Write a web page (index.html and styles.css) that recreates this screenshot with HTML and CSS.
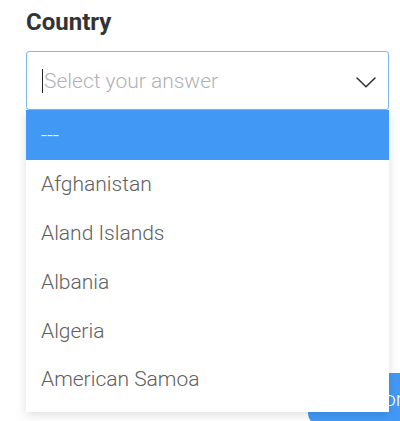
FILE: index.html
```html
<!DOCTYPE html>
<html lang="en">
<head>
<meta charset="utf-8">
<title>Country</title>
<link rel="stylesheet" href="styles.css">
</head>
<body>
<div class="form">
  <label class="label">Country</label>
  <div class="select-wrap">
    <div class="select">
      <span class="caret"></span>
      <span class="placeholder">Select your answer</span>
      <svg class="chevron" width="20" height="11" viewBox="0 0 20 11" aria-hidden="true">
        <polyline points="1,1 10,9.8 19,1" fill="none" stroke="#333" stroke-width="1.6" stroke-linecap="round" stroke-linejoin="round"/>
      </svg>
    </div>
    <ul class="menu">
      <li class="opt active">---</li>
      <li class="opt">Afghanistan</li>
      <li class="opt">Aland Islands</li>
      <li class="opt">Albania</li>
      <li class="opt">Algeria</li>
      <li class="opt">American Samoa</li>
    </ul>
  </div>
  <div class="actions">
    <button class="btn">Search for</button>
  </div>
</div>
</body>
</html>
```

FILE: styles.css
```css
html, body {
  margin: 0;
  padding: 0;
  background: #ffffff;
  overflow: hidden;
  font-family: Roboto, "Liberation Sans", sans-serif;
}

.form {
  padding: 8px 11px 0 26px;
  display: flex;
  flex-direction: column;
}

.label {
  display: block;
  font-size: 24px;
  line-height: 28px;
  font-weight: 700;
  color: #333333;
  margin-bottom: 15px;
}

.select-wrap {
  position: relative;
}

.select {
  height: 59px;
  box-sizing: border-box;
  border: 1px solid #7db6f4;
  border-radius: 3px;
  display: flex;
  align-items: center;
  padding: 0 12px 0 15px;
  background: #ffffff;
}

.caret {
  width: 1px;
  height: 24px;
  background: #222222;
  margin-right: 1px;
  flex-shrink: 0;
}

.placeholder {
  flex: 1;
  font-size: 21px;
  line-height: 24px;
  font-weight: 300;
  color: #b2b2b2;
}

.chevron {
  margin-top: 3px;
  flex-shrink: 0;
}

.menu {
  position: absolute;
  top: 100%;
  left: 0;
  right: 0;
  margin: 0;
  padding: 0 0 8px;
  list-style: none;
  background: #ffffff;
  box-shadow: 0 3px 10px rgba(0, 0, 0, 0.13);
  z-index: 2;
}

.opt {
  height: 48.75px;
  display: flex;
  align-items: center;
  padding: 0 15px;
  font-size: 21px;
  line-height: 24px;
  font-weight: 300;
  color: #606060;
}

.opt.active {
  height: 50px;
  background: #4299f5;
  color: #ffffff;
}

.actions {
  display: flex;
  margin-top: 263px;
}

.btn {
  margin-left: 282px;
  flex-shrink: 0;
  width: 200px;
  height: 52px;
  border: none;
  border-radius: 12px;
  background: #4299f5;
  color: #ffffff;
  font-family: Roboto, "Liberation Sans", sans-serif;
  font-size: 21px;
  font-weight: 300;
  text-align: left;
  padding: 0;
  line-height: 24px;
}
```
